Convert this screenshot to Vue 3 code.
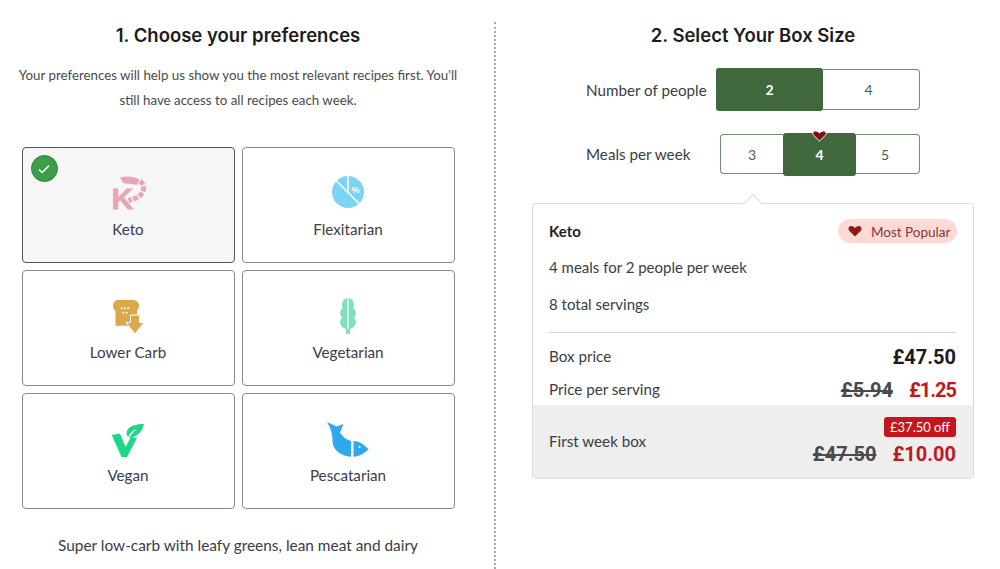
<template>
  <div class="page">
    <section class="left">
      <h2>1. Choose your preferences</h2>
      <p class="intro">
        Your preferences will help us show you the most relevant recipes first. You'll<br />
        still have access to all recipes each week.
      </p>
      <div class="pref-grid">
        <button
          v-for="pref in preferences"
          :key="pref"
          class="pref-card"
          :class="{ selected: pref === selected }"
          @click="selected = pref"
        >
          <span v-if="pref === selected" class="check">
            <svg width="14" height="14" viewBox="0 0 14 14">
              <path d="M2 7.500l3.200 3L12 3.600" fill="none" stroke="#fff" stroke-width="1.600" />
            </svg>
          </span>
          <svg class="pref-icon" width="44" height="38" viewBox="0 0 44 38">
            <g v-if="pref === 'Keto'" fill="#e8a6b5">
              <text x="5.500" y="34.500" class="keto-k">K</text>
              <path d="M14 3.500c6-1.500 14-1.500 19.500 2l-2.500 5.500c-6-1.500-11-1-14-2z" />
              <path
                d="M34 7c4.500 3 5 10 .5 14-3 3-7 4-12 5.500"
                fill="none"
                stroke="#e8a6b5"
                stroke-width="5"
                stroke-dasharray="5 1.500"
              />
            </g>
            <g v-else-if="pref === 'Flexitarian'">
              <circle cx="22" cy="18" r="16" fill="#7dd3f3" />
              <path d="M22 1v17M10 6.500l23.500 23.500" stroke="#fff" stroke-width="1.500" fill="none" />
              <text x="29.500" y="19" class="percent">%</text>
            </g>
            <g v-else-if="pref === 'Lower Carb'">
              <path
                d="M13 3h14c3.500 0 6 2.500 6 5.500 0 2.500-1 4-2 5v5h-6v7h-4l2.500 3.300H9.500V14C7.500 12.500 7 10.500 7 8.500 7 5 9.500 3 13 3z"
                fill="#dba84a"
              />
              <path d="M24.500 18h9v7.500H38L29 37 20 25.500h4.500z" fill="#dba84a" stroke="#fff" stroke-width="1" />
              <g fill="#fff">
                <circle cx="15.700" cy="11.300" r="1" />
                <circle cx="19" cy="11.300" r="1" />
                <circle cx="22.300" cy="11.300" r="1" />
                <circle cx="17.300" cy="15.700" r="1" />
                <circle cx="20.700" cy="15.700" r="1" />
              </g>
            </g>
            <g v-else-if="pref === 'Vegetarian'">
              <path
                d="M22 1c3.500 0 6 3 6 7 0 2-1 3-1 3 2 1 3.500 4 2.500 7-.5 2-2 2.500-2 2.500 2 1 3 4 2 6.500-1 3-3 4-5.500 5v5h-4v-5c-2.500-1-4.500-2-5.500-5-1-2.500 0-5.500 2-6.500 0 0-1.500-.5-2-2.500-1-3 .5-6 2.500-7 0 0-1-1-1-3 0-4 2.500-7 6-7z"
                fill="#7fe0bd"
              />
              <path d="M22 1v31" stroke="#fff" stroke-width="1.300" />
            </g>
            <g v-else-if="pref === 'Vegan'">
              <path d="M5.700 15l8.300-1.500L19.500 27 25 17l6 1-10 19h-5.500z" fill="#1fd68b" />
              <path d="M38 4c-2 8-7 13-15 14 2-3 5-7 8-9-4 1-7 4-9 8-4-6 1-13 16-13z" fill="#1fd68b" />
            </g>
            <g v-else fill="#2fa9ec">
              <path
                d="M1 2l9.500 4.500L17.500 4 14 12.700c3 4 6 7 11 8.300v15.700C15 36 6.500 30 6.500 21 6.500 15 5 8 1 2z"
              />
              <path d="M27.500 21c6 0 11 4 15 8.300-4 4-9 7.400-15 7.400z" />
              <circle cx="33.500" cy="27" r="1.100" fill="#fff" />
            </g>
          </svg>
          <span class="pref-name">{{ pref }}</span>
        </button>
      </div>
      <p class="pref-desc">Super low-carb with leafy greens, lean meat and dairy</p>
    </section>

    <section class="right">
      <h2>2. Select Your Box Size</h2>

      <div class="size-row first">
        <span class="size-label">Number of people</span>
        <div class="segments people">
          <button
            v-for="n in [2, 4]"
            :key="n"
            class="segment"
            :class="{ active: n === people }"
            @click="people = n"
          >
            {{ n }}
          </button>
        </div>
      </div>

      <div class="size-row second">
        <span class="size-label">Meals per week</span>
        <div class="segments meals">
          <button
            v-for="n in [3, 4, 5]"
            :key="n"
            class="segment"
            :class="{ active: n === meals }"
            @click="meals = n"
          >
            <svg v-if="n === 4" class="seg-heart" width="15" height="12" viewBox="0 0 15 12">
              <path
                d="M7.500 11L1.500 5.200C0 3.500 1 1 3.500 1c1.800 0 3 1 4 2 1-1 2.200-2 4-2 2.500 0 3.500 2.500 2 4.200z"
                fill="#7d0f0f"
                stroke="#fff"
                stroke-width="1"
              />
            </svg>
            {{ n }}
          </button>
        </div>
      </div>

      <div class="summary">
        <span class="notch"></span>
        <div class="summary-top">
          <div class="summary-head">
            <strong>{{ selected }}</strong>
            <span class="popular">
              <svg width="14" height="12" viewBox="0 0 14 12">
                <path
                  d="M7 11.500L1.200 5.700C-.3 4 .6 1 3.400 1 5 1 6.200 2 7 3c.8-1 2-2 3.600-2 2.800 0 3.700 3 2.200 4.700z"
                  fill="#8c1c1c"
                />
              </svg>
              <span class="popular-text">Most Popular</span>
            </span>
          </div>
          <p class="line">{{ meals }} meals for {{ people }} people per week</p>
          <p class="line second-line">{{ meals * people }} total servings</p>
          <hr />
          <div class="price-row">
            <span class="row-label">Box price</span>
            <span class="price">£47.50</span>
          </div>
          <div class="price-row serving">
            <span class="row-label">Price per serving</span>
            <span class="price"><s>£5.94</s><em class="tight">£1.25</em></span>
          </div>
        </div>
        <div class="first-week">
          <span class="row-label">First week box</span>
          <div class="first-prices">
            <span class="off">£37.50 off</span>
            <span class="price"><s>£47.50</s><em>£10.00</em></span>
          </div>
        </div>
      </div>
    </section>
  </div>
</template>

<script setup>
import { ref } from 'vue'

const preferences = ['Keto', 'Flexitarian', 'Lower Carb', 'Vegetarian', 'Vegan', 'Pescatarian']

const selected = ref('Keto')
const people = ref(2)
const meals = ref(4)
</script>

<style>
html,
body {
  margin: 0;
  background: #fff;
}
</style>

<style scoped>
.page {
  display: flex;
  width: 1000px;
  height: 569px;
  overflow: hidden;
  font-family: Lato, 'Noto Sans', sans-serif;
  font-size: 15.2px;
  color: #3a3d44;
}

h2 {
  margin: 0;
  padding-top: 1px;
  font-family: Inter, Roboto, sans-serif;
  font-size: 18.500px;
  font-weight: 600;
  line-height: 25px;
  text-align: center;
  color: #1c1c1c;
}

button {
  font: inherit;
  cursor: pointer;
}

.left {
  box-sizing: border-box;
  width: 494px;
  padding: 22px 18px 0 0;
}

.intro {
  margin: 15px 0 0;
  line-height: 24.500px;
  font-size: 13.300px;
  text-align: center;
  color: #4a4a4a;
}

.pref-grid {
  display: grid;
  grid-template-columns: 213px 213px;
  grid-auto-rows: 116px;
  gap: 7px;
  justify-content: center;
  margin-top: 35px;
}

.pref-card {
  position: relative;
  display: flex;
  flex-direction: column;
  align-items: center;
  box-sizing: border-box;
  padding: 26px 0 0;
  background: #fff;
  border: 1px solid #8a8a8a;
  border-radius: 4px;
  color: #3a3d44;
}

.pref-card.selected {
  background: #f6f6f6;
  border-color: #555;
}

.check {
  position: absolute;
  top: 7px;
  left: 8px;
  display: flex;
  align-items: center;
  justify-content: center;
  box-sizing: border-box;
  width: 27px;
  height: 27px;
  background: #3d9e4a;
  border: 1px solid #2f7f3b;
  border-radius: 50%;
}

.pref-icon {
  display: block;
  overflow: visible;
}

.keto-k {
  font-family: 'Liberation Sans', sans-serif;
  font-size: 30px;
  font-weight: 700;
  stroke: #e8a6b5;
  stroke-width: 0.800px;
}

.percent {
  font-family: 'Liberation Sans', sans-serif;
  font-size: 9px;
  font-weight: 700;
  text-anchor: middle;
  fill: #fff;
}

.pref-name {
  margin-top: 7px;
  line-height: 20px;
}

.pref-desc {
  margin: 24px 0 0;
  font-size: 15.400px;
  line-height: 24px;
  text-align: center;
}

.right {
  box-sizing: border-box;
  width: 506px;
  margin-top: 22px;
  padding-left: 36px;
  border-left: 2px dotted #a8a8a8;
}

.right h2 {
  width: 442px;
}

.size-row {
  display: flex;
  align-items: center;
  justify-content: space-between;
  width: 334px;
  margin-left: 54px;
}

.size-row.first {
  margin-top: 21px;
  height: 41px;
}

.size-row.second {
  margin-top: 24px;
  height: 40px;
}

.segments {
  display: flex;
  align-self: stretch;
}

.segment {
  position: relative;
  flex: none;
  box-sizing: border-box;
  padding: 0;
  background: #fff;
  border: 1px solid #6f8f6e;
  border-left-width: 0;
  border-right-width: 0;
  color: #41683d;
  font-size: 14px;
}

.segment:first-child {
  border-left-width: 1px;
  border-radius: 4px 0 0 4px;
}

.segment:last-child {
  padding-right: 5px;
  border-right-width: 1px;
  border-radius: 0 4px 4px 0;
}

.segment.active {
  margin: -1px 0;
  padding-right: 0;
  background: #41683d;
  border: 0;
  border-radius: 3px;
  color: #fff;
  font-weight: 700;
}

.people .segment {
  width: 97px;
}

.people .segment.active {
  width: 107px;
}

.meals .segment {
  width: 63px;
}

.meals .segment:last-child {
  width: 64px;
}

.meals .segment.active {
  width: 73px;
  margin: -1px 0 -2px;
}

.seg-heart {
  position: absolute;
  top: -3px;
  left: 50%;
  margin-left: -8px;
}

.summary {
  position: relative;
  box-sizing: border-box;
  width: 442px;
  margin-top: 29px;
  background: #fff;
  border: 1px solid #dcdcdc;
  border-radius: 4px;
}

.notch {
  position: absolute;
  top: -7px;
  left: 213px;
  width: 13px;
  height: 13px;
  background: #fff;
  border-top: 1px solid #dcdcdc;
  border-left: 1px solid #dcdcdc;
  transform: rotate(45deg);
}

.summary-top {
  padding: 15px 17px 3px 16px;
}

.summary-head {
  display: flex;
  align-items: center;
  justify-content: space-between;
  height: 24px;
  margin-right: -1px;
}

.summary-head strong {
  font-size: 15px;
  color: #222;
}

.popular {
  display: flex;
  align-items: center;
  gap: 9px;
  box-sizing: border-box;
  width: 119px;
  height: 24px;
  padding-left: 10px;
  background: #ffd9d4;
  border-radius: 12px;
  font-size: 13.500px;
  color: #7f3a3a;
}

.popular-text {
  padding-top: 1px;
}

.line {
  margin: 12px 0 0;
  line-height: 24px;
  font-size: 15px;
}

.line.second-line {
  margin-top: 13px;
}

hr {
  margin: 16px 0 12px;
  height: 1px;
  background: #d8d8d8;
  border: 0;
}

.price-row {
  display: flex;
  align-items: center;
  justify-content: space-between;
  height: 24px;
}

.price-row.serving {
  margin-top: 9px;
}

.row-label {
  margin-bottom: 2px;
}

.price {
  font-family: Roboto, sans-serif;
  font-size: 20px;
  font-weight: 700;
  color: #1c1c1c;
}

.price s {
  color: #4a4a4a;
}

.price em {
  margin-left: 16px;
  font-style: normal;
  color: #c4161c;
}

.price em.tight {
  letter-spacing: -1px;
}

.first-week {
  display: flex;
  align-items: center;
  justify-content: space-between;
  padding: 12px 17px 12px 16px;
  background: #eee;
  border-radius: 0 0 3px 3px;
}

.first-prices {
  display: flex;
  flex-direction: column;
  align-items: flex-end;
  gap: 5px;
}

.off {
  padding: 0 6px;
  background: #c4161c;
  border-radius: 3px;
  font-size: 13px;
  line-height: 20px;
  color: #fff;
}

.first-prices .price {
  line-height: 24px;
}
</style>
